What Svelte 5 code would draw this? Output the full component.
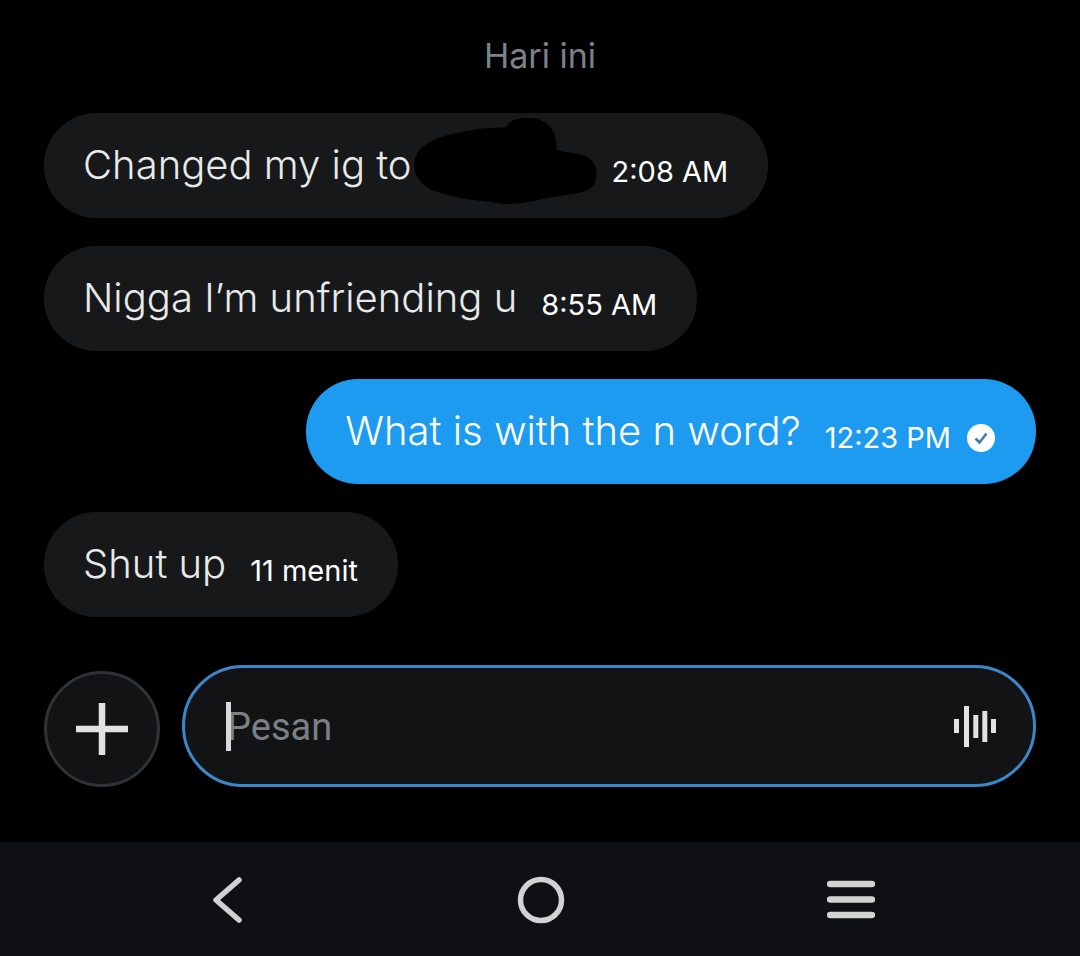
<script>
  const messages = [
    { text: 'Changed my ig to', time: '2:08 AM', redacted: true },
    { text: 'Nigga I’m unfriending u', time: '8:55 AM' },
    { text: 'What is with the n word?', time: '12:23 PM', mine: true },
    { text: 'Shut up', time: '11 menit' }
  ];
</script>

<main class="screen">
  <div class="day">Hari ini</div>

  <section class="thread">
    {#each messages as msg}
      <div class="bubble" class:mine={msg.mine}>
        <span class="text">{msg.text}</span>
        {#if msg.redacted}
          <svg class="blot" width="192" height="88" viewBox="0 0 200 92" aria-hidden="true">
            <path d="M2 50C2 30 22 20 50 15C70 11 85 10 98 10C100 2 112 -1 125 0C143 2 151 14 151 33C158 37 175 36 183 41C194 47 195 62 189 71C183 79 160 80 140 84C120 89 100 92 84 88C60 86 35 82 18 74C8 68 2 60 2 50Z" />
          </svg>
        {/if}
        <span class="time">{msg.time}</span>
        {#if msg.mine}
          <svg class="read" width="28" height="28" viewBox="0 0 28 28" aria-hidden="true">
            <circle cx="14" cy="14" r="14" fill="#fff" />
            <path d="M8.5 14.5l4 4 7-9" fill="none" stroke="#3f7fae" stroke-width="2.6" />
          </svg>
        {/if}
      </div>
    {/each}
  </section>

  <section class="composer">
    <button class="add" aria-label="Tambah">
      <svg width="52" height="52" viewBox="0 0 52 52"><path d="M26 0v52M0 26h52" stroke="#e2e2e2" stroke-width="6.5" /></svg>
    </button>
    <div class="input">
      <span class="caret"></span>
      <span class="placeholder">Pesan</span>
      <svg class="voice" width="42" height="41" viewBox="0 0 42 41" aria-hidden="true">
        <path d="M2.500 13v14M12.500 0v41M21.800 9v23M30.800 5v31M39.500 13v14" stroke="#e2e2e2" stroke-width="5" />
      </svg>
    </div>
  </section>

  <nav class="navbar">
    <svg width="32" height="46" viewBox="0 0 32 46"><path d="M27 3L4 23l23 20" fill="none" stroke="#d2d2d2" stroke-width="5.500" stroke-linecap="round" stroke-linejoin="round" /></svg>
    <svg class="home" width="48" height="48" viewBox="0 0 48 48"><circle cx="24" cy="24" r="20.500" fill="none" stroke="#d2d2d2" stroke-width="5.500" /></svg>
    <svg width="48" height="40" viewBox="0 0 48 40"><path d="M3 4h42M3 19.500h42M3 35h42" stroke="#d2d2d2" stroke-width="6.500" stroke-linecap="round" /></svg>
  </nav>
</main>

<style>
  :global(body) {
    background: #000;
  }
  .screen {
    width: 1080px;
    height: 956px;
    display: flex;
    flex-direction: column;
    background: #000;
    font-family: Inter, "Liberation Sans", sans-serif;
    overflow: hidden;
  }
  .day {
    padding-top: 36px;
    height: 77px;
    box-sizing: border-box;
    line-height: 40px;
    text-align: center;
    font-size: 34px;
    font-weight: 400;
    color: #7c8287;
  }
  .thread {
    display: flex;
    flex-direction: column;
    align-items: flex-start;
    gap: 28px;
    padding: 36px 44px 0;
  }
  .bubble {
    position: relative;
    display: flex;
    align-items: center;
    height: 105px;
    box-sizing: border-box;
    padding: 0 40px 0 39px;
    border-radius: 52px;
    background: #17181a;
    color: #e7e9ea;
  }
  .bubble.mine {
    align-self: flex-end;
    background: #1d9bf0;
    color: #fff;
    padding-right: 41px;
  }
  .text {
    font-size: 40px;
    font-weight: 300;
    white-space: nowrap;
    position: relative;
    top: -1px;
  }
  .blot {
    flex: none;
    fill: #000;
    position: relative;
    top: -4px;
    margin: 0 8px 0 0;
  }
  .time {
    margin-left: 24px;
    font-size: 29px;
    color: #fff;
    white-space: nowrap;
    position: relative;
    top: 6px;
  }
  .blot + .time {
    margin-left: 0;
  }
  .read {
    margin-left: 16px;
    position: relative;
    top: 6px;
  }
  .composer {
    display: flex;
    align-items: flex-end;
    gap: 22px;
    padding: 48px 44px 0;
  }
  .add {
    flex: none;
    display: flex;
    align-items: center;
    justify-content: center;
    width: 116px;
    height: 116px;
    padding: 0;
    border: 3px solid #2f3336;
    border-radius: 50%;
    background: #111315;
  }
  .input {
    position: relative;
    flex: 1;
    display: flex;
    align-items: center;
    height: 122px;
    box-sizing: border-box;
    padding: 0 37px 0 42px;
    border: 3px solid #3b87c9;
    border-radius: 61px;
    background: #111315;
  }
  .caret {
    position: absolute;
    left: 41px;
    top: 34px;
    width: 5px;
    height: 49px;
    background: #d9d9d9;
  }
  .placeholder {
    font-family: Roboto, "Liberation Sans", sans-serif;
    font-size: 38px;
    color: #7b8085;
    padding-top: 2px;
  }
  .voice {
    margin-left: auto;
  }
  .navbar {
    margin-top: auto;
    height: 114px;
    box-sizing: border-box;
    display: flex;
    align-items: center;
    gap: 262px;
    padding: 2px 0 0 212px;
    background: #0e1014;
  }
  .home {
    margin-left: 11px;
  }
</style>
